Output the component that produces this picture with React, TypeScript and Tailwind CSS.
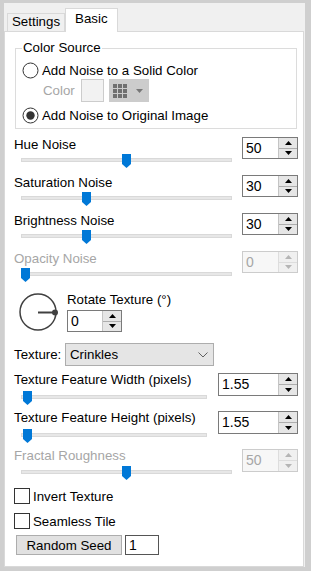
import React from "react";

const Thumb = () => (
  <svg width="9" height="14" viewBox="0 0 9 14" className="block">
    <path d="M0 0H9V10L4.5 14L0 10Z" fill="#0078d7" />
  </svg>
);

function Slider({ w, pos, mt }: { w: string; pos: number; mt: string }) {
  return (
    <div className={`relative h-[16px] ml-[7px] ${w} ${mt}`}>
      <div className="absolute left-0 right-0 top-[6px] h-[4px] bg-[#e7e7e7] border border-[#d9d9d9]" />
      <div className="absolute top-[2px]" style={{ left: pos - 4.5 }}>
        <Thumb />
      </div>
    </div>
  );
}

const UpArrow = ({ c }: { c: string }) => (
  <svg width="7" height="4" viewBox="0 0 7 4" className="block">
    <path d="M0 4L3.5 0L7 4Z" fill={c} />
  </svg>
);
const DownArrow = ({ c }: { c: string }) => (
  <svg width="7" height="4" viewBox="0 0 7 4" className="block">
    <path d="M0 0L3.5 4L7 0Z" fill={c} />
  </svg>
);

function Spinner({
  value,
  w,
  h,
  disabled,
}: {
  value: string;
  w: string;
  h: string;
  disabled?: boolean;
}) {
  const arrow = disabled ? "#b5b5b5" : "#000000";
  return (
    <div
      className={`flex ${w} ${h} border ${
        disabled ? "border-[#cccccc] bg-[#f7f7f7]" : "border-[#7a7a7a] bg-white"
      }`}
    >
      <div
        className={`flex-1 flex items-center pl-[3px] text-[14px] ${
          disabled ? "text-[#a6a6a6]" : "text-black"
        }`}
      >
        {value}
      </div>
      <div
        className={`w-[19px] flex flex-col border-l ${
          disabled ? "border-[#dddddd]" : "border-[#c4c4c4]"
        }`}
      >
        <div
          className={`flex-1 flex items-center justify-center border-b ${
            disabled ? "bg-[#f0f0f0] border-[#dddddd]" : "bg-[#e6e6e6] border-[#adadad]"
          }`}
        >
          <UpArrow c={arrow} />
        </div>
        <div
          className={`flex-1 flex items-center justify-center ${
            disabled ? "bg-[#f0f0f0]" : "bg-[#e6e6e6]"
          }`}
        >
          <DownArrow c={arrow} />
        </div>
      </div>
    </div>
  );
}

function Radio({ checked }: { checked?: boolean }) {
  return (
    <svg width="17" height="17" viewBox="0 0 17 17" className="block shrink-0">
      <circle cx="8.5" cy="8.5" r="7.5" fill="white" stroke="#333333" strokeWidth="1" />
      {checked && <circle cx="8.5" cy="8.5" r="4.2" fill="#333333" />}
    </svg>
  );
}

function SliderRow({
  label,
  value,
  pos,
  disabled,
}: {
  label: string;
  value: string;
  pos: number;
  disabled?: boolean;
}) {
  return (
    <div className="h-[38px] flex items-start justify-between">
      <div className="flex flex-col">
        <div className={`h-[15px] leading-[15px] ${disabled ? "text-[#a6a6a6]" : ""}`}>{label}</div>
        <Slider w="w-[211px]" pos={pos} mt="mt-0" />
      </div>
      <Spinner value={value} w="w-[56px]" h="h-[22px]" disabled={disabled} />
    </div>
  );
}

function Checkbox({ label, mt }: { label: string; mt: string }) {
  return (
    <div className={`flex items-center h-[16px] ${mt}`}>
      <div className="w-[16px] h-[16px] border border-[#333333] bg-white shrink-0" />
      <div className="ml-[3px] leading-[15px]">{label}</div>
    </div>
  );
}

export default function App() {
  return (
    <div className="w-[311px] h-[571px] bg-[#cfcfcf] pt-[3px] pl-[4px] pr-[6px] pb-[4px] [font-family:'Liberation_Sans',Arial,sans-serif] text-[13.3px] text-black">
      <div className="h-full bg-[#f0f0f0] flex flex-col">
        <div className="h-[28px] flex items-end pl-[3px] shrink-0">
          <div className="h-[18px] px-[4px] border border-b-0 border-[#d9d9d9] bg-[#f0f0f0] leading-[16px]">
            Settings
          </div>
          <div className="relative z-10 -mb-[1px] h-[24px] px-[9px] pt-[2px] border border-b-0 border-[#d9d9d9] bg-white leading-[15px]">
            Basic
          </div>
        </div>
        <div className="w-[300px] flex-1 border border-[#d9d9d9] bg-white pl-[9px] pr-[5px] flex flex-col">
          {/* Color Source group */}
          <div className="relative mt-[16px] ml-[1px] mr-[1px] border border-[#dcdcdc] pt-[13px] pl-[6px] pb-[4px]">
            <div className="absolute top-[-9px] left-[6px] bg-white px-[1px] leading-[15px]">
              Color Source
            </div>
            <div className="flex items-center h-[17px]">
              <Radio />
              <div className="ml-[3px] leading-[15px]">Add Noise to a Solid Color</div>
            </div>
            <div className="flex items-center h-[23px]">
              <div className="ml-[21px] w-[38px] text-[#a6a6a6] leading-[15px]">Color</div>
              <div className="w-[23px] h-[23px] border border-[#cccccc] bg-[#f2f2f2]" />
              <div className="ml-[5px] w-[40px] h-[23px] bg-[#cccccc] flex items-center pl-[4px]">
                <svg width="14" height="14" viewBox="0 0 14 14" className="block">
                  {[0, 5, 10].map((y) =>
                    [0, 5, 10].map((x) => (
                      <rect key={`${x}-${y}`} x={x} y={y} width="4" height="4" fill="#6f6f6f" />
                    ))
                  )}
                </svg>
                <div className="ml-[9px]">
                  <DownArrow c="#777777" />
                </div>
              </div>
            </div>
            <div className="flex items-center h-[18px] mt-[4px]">
              <Radio checked />
              <div className="ml-[3px] leading-[15px]">Add Noise to Original Image</div>
            </div>
          </div>

          <div className="mt-[8px]">
            <SliderRow label="Hue Noise" value="50" pos={105.5} />
            <SliderRow label="Saturation Noise" value="30" pos={65} />
            <SliderRow label="Brightness Noise" value="30" pos={65} />
            <SliderRow label="Opacity Noise" value="0" pos={4} disabled />
          </div>

          {/* Rotate */}
          <div className="mt-[3px] flex items-start">
            <svg width="40" height="40" viewBox="0 0 40 40" className="block ml-[4px]">
              <circle cx="20" cy="20" r="18" fill="none" stroke="#404040" strokeWidth="1.5" />
              <line x1="20" y1="20.5" x2="37" y2="20.5" stroke="#404040" strokeWidth="2" />
              <circle cx="37" cy="20.5" r="3" fill="#404040" />
            </svg>
            <div className="ml-[9px] flex flex-col">
              <div className="h-[15px] leading-[15px]">Rotate Texture (°)</div>
              <div className="mt-[3px]">
                <Spinner value="0" w="w-[55px]" h="h-[22px]" />
              </div>
            </div>
          </div>

          {/* Texture */}
          <div className="mt-[11px] flex items-center h-[23px]">
            <div className="w-[51px] leading-[15px]">Texture:</div>
            <div className="w-[149px] h-[23px] bg-[#e5e5e5] border border-[#adadad] flex items-center justify-between pl-[4px] pr-[5px]">
              <div className="leading-[15px]">Crinkles</div>
              <svg width="10" height="6" viewBox="0 0 10 6" className="block">
                <path d="M0.5 0.5L5 5L9.5 0.5" fill="none" stroke="#606060" strokeWidth="1" />
              </svg>
            </div>
          </div>

          <div className="mt-[6px]">
            <div className="h-[38px] flex items-start justify-between">
              <div className="flex flex-col">
                <div className="h-[15px] leading-[15px]">Texture Feature Width (pixels)</div>
                <Slider w="w-[186px]" pos={6} mt="mt-[2px]" />
              </div>
              <div className="mt-[1px]">
                <Spinner value="1.55" w="w-[80px]" h="h-[23px]" />
              </div>
            </div>
            <div className="h-[38px] flex items-start justify-between">
              <div className="flex flex-col">
                <div className="h-[15px] leading-[15px]">Texture Feature Height (pixels)</div>
                <Slider w="w-[186px]" pos={6} mt="mt-[2px]" />
              </div>
              <div className="mt-[1px]">
                <Spinner value="1.55" w="w-[80px]" h="h-[23px]" />
              </div>
            </div>
            <div className="h-[38px] flex items-start justify-between">
              <div className="flex flex-col">
                <div className="h-[15px] leading-[15px] text-[#a6a6a6]">Fractal Roughness</div>
                <Slider w="w-[211px]" pos={105.5} mt="mt-[1px]" />
              </div>
              <div className="mt-[1px]">
                <Spinner value="50" w="w-[56px]" h="h-[23px]" disabled />
              </div>
            </div>
          </div>

          <Checkbox label="Invert Texture" mt="mt-[2px]" />
          <Checkbox label="Seamless Tile" mt="mt-[9px]" />

          <div className="mt-[6px] flex items-center">
            <div className="ml-[2px] w-[106px] h-[20px] bg-[#e1e1e1] border border-[#adadad] flex items-center justify-center leading-[15px]">
              Random Seed
            </div>
            <div className="ml-[3px] w-[34px] h-[20px] border border-[#555555] bg-white flex items-center pl-[3px] text-[14px]">
              1
            </div>
          </div>
        </div>
      </div>
    </div>
  );
}
